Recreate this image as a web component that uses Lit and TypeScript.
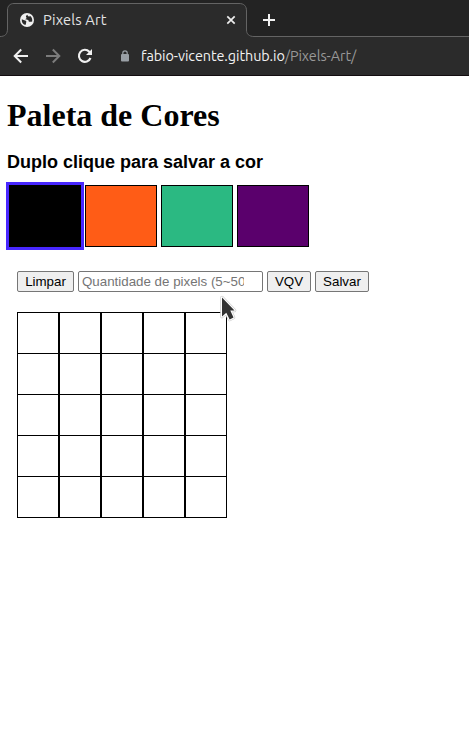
import { LitElement, html, css } from "lit";
import { customElement, state } from "lit/decorators.js";
import { classMap } from "lit/directives/class-map.js";

@customElement("browser-bar")
class BrowserBar extends LitElement {
  static styles = css`
    :host {
      display: block;
      height: 76px;
      box-sizing: border-box;
      background: #2b2b2b;
      border-bottom: 1px solid #130d10;
      font-family: Ubuntu, "Noto Sans", sans-serif;
      color: #e4e4e4;
    }
    svg {
      display: block;
      flex: none;
    }
    .tabs {
      height: 37px;
      display: grid;
      background: #232323;
    }
    .outline,
    .labels {
      grid-area: 1 / 1;
    }
    .labels {
      display: flex;
      align-items: center;
      padding: 3px 0 0 20px;
      height: 34px;
    }
    .title {
      width: 183px;
      padding-left: 9px;
      font-size: 14.667px;
      line-height: 20px;
      letter-spacing: 0.15px;
    }
    .plus {
      margin-left: 27px;
    }
    .toolbar {
      height: 38px;
      display: flex;
      align-items: center;
      padding-left: 13px;
    }
    .forward,
    .reload {
      margin-left: 16px;
    }
    .lock {
      margin-left: 27px;
    }
    .address {
      margin-left: 11px;
      color: #f2f2f2;
      font-size: 14.4px;
      line-height: 20px;
      white-space: nowrap;
      letter-spacing: -0.07px;
    }
    .path {
      color: #989898;
    }
  `;

  render() {
    return html`
      <div class="tabs">
        <svg class="outline" width="469" height="37">
          <path d="M0 36.500C5 36.500 7.500 34 7.500 29V10C7.500 6 10 3.500 14 3.500H239C244 3.500 246.500 6 246.500 11V30C246.500 34 249 36.500 254 36.500H469V38H0Z" fill="#2b2b2b" stroke="#646464" />
        </svg>
        <div class="labels">
          <svg width="14" height="14" viewBox="0 0 14 14">
            <circle cx="7" cy="7" r="7" fill="#f0f0f0" />
            <path d="M7.700 1.700C6.200 2.200 5.500 3.300 6.200 4.200C7 4.800 6.300 5.600 5.400 6C5.500 7.200 7.200 6.600 8.100 7C9 7.500 8.300 8.300 9 8.700C10.200 8.800 11.200 8.800 12.200 8.500C12.600 6 11.600 3.700 9.900 2.700C9.600 4 8.500 3.500 7.700 3Z" fill="#2b2b2b" />
            <path d="M1.800 6.200C3.300 7 5.400 7.100 6.200 8.200C6.800 9 5.700 9.700 5.900 10.300C6.400 10.900 5.500 11.600 5.300 12C2.900 11.300 1.400 9 1.800 6.200Z" fill="#2b2b2b" />
          </svg>
          <span class="title">Pixels Art</span>
          <svg width="10" height="10" viewBox="0 0 10 10">
            <path d="M1.300 1.300L8.700 8.700M8.700 1.300L1.300 8.700" stroke="#ededed" stroke-width="1.700" />
          </svg>
          <svg class="plus" width="12" height="12" viewBox="0 0 12 12">
            <path d="M6 0V12M0 6H12" stroke="#f2f2f2" stroke-width="2" />
          </svg>
        </div>
      </div>
      <div class="toolbar">
        <svg width="16" height="16" viewBox="0 0 16 16">
          <path d="M15 8H2.200M8.200 1.500L1.700 8L8.200 14.500" fill="none" stroke="#f0f0f0" stroke-width="2" />
        </svg>
        <svg class="forward" width="16" height="16" viewBox="0 0 16 16">
          <path d="M1 8H13.800M7.800 1.500L14.300 8L7.800 14.500" fill="none" stroke="#7c7c7c" stroke-width="2" />
        </svg>
        <svg class="reload" width="16" height="16" viewBox="0 0 16 16">
          <path d="M13.500 10A6 6 0 1 1 12.300 3.700L13.500 5" fill="none" stroke="#f0f0f0" stroke-width="2.100" />
          <path d="M15 1V7H9Z" fill="#f0f0f0" />
        </svg>
        <svg class="lock" width="10" height="12" viewBox="0 0 10 12">
          <rect x="1" y="4" width="8" height="7.500" rx="1" fill="#9aa0a6" />
          <path d="M2.800 4.500V3A2.200 2.200 0 0 1 7.200 3V4.500" fill="none" stroke="#9aa0a6" stroke-width="1.200" />
        </svg>
        <span class="address">fabio-vicente.github.io<span class="path">/Pixels-Art/</span></span>
      </div>
    `;
  }
}

@customElement("app-root")
class AppRoot extends LitElement {
  static styles = css`
    :host {
      display: block;
      position: relative;
      width: 469px;
      height: 729px;
      overflow: hidden;
      background: #fff;
      color: #000;
      font-family: "Liberation Sans", Arial, sans-serif;
    }
    h1 {
      margin: 21px 0 0 7px;
      font: bold 32px/37px "Liberation Serif", serif;
    }
    h2 {
      margin: 18px 0 0 7px;
      font-size: 18px;
      line-height: 21px;
    }
    .palette {
      display: flex;
      gap: 4px;
      margin: 12px 0 0 9px;
    }
    .color {
      box-sizing: border-box;
      width: 72px;
      height: 62px;
      border: 1px solid #000;
    }
    .selected {
      outline: 3px solid #4827ff;
    }
    .controls {
      display: flex;
      gap: 4px;
      margin: 24px 0 0 17px;
    }
    button,
    input {
      box-sizing: border-box;
      height: 21px;
      margin: 0;
      border: 1px solid #767676;
      border-radius: 2px;
      font: 13.333px/15px "Liberation Sans", Arial, sans-serif;
      color: #000;
    }
    button {
      padding: 1px 6px;
      background: #efefef;
    }
    .clear {
      width: 57px;
    }
    .apply {
      width: 44px;
    }
    .save {
      width: 54px;
    }
    input {
      width: 185px;
      padding: 1px 18px 1px 3px;
      background: #fff;
    }
    input::placeholder {
      color: #757575;
    }
    .board {
      display: grid;
      grid-template-columns: repeat(5, 42px);
      grid-auto-rows: 41px;
      width: 210px;
      margin: 20px 0 0 17px;
      border-top: 1px solid #000;
    }
    .pixel {
      border: solid #000;
      border-width: 0 1px 1px;
    }
    .cursor {
      position: absolute;
      left: 217px;
      top: 293px;
    }
  `;

  @state() selected = 0;

  colors = ["#000000", "#ff5c16", "#2bb982", "#5a006c"];

  render() {
    return html`
      <browser-bar></browser-bar>
      <h1>Paleta de Cores</h1>
      <h2>Duplo clique para salvar a cor</h2>
      <div class="palette">
        ${this.colors.map(
          (c, i) => html`<div
            class=${classMap({ color: true, selected: i === this.selected })}
            style="background:${c}"
            @click=${() => (this.selected = i)}
          ></div>`
        )}
      </div>
      <div class="controls">
        <button class="clear">Limpar</button>
        <input placeholder="Quantidade de pixels (5~50)" />
        <button class="apply">VQV</button>
        <button class="save">Salvar</button>
      </div>
      <div class="board">
        ${Array.from({ length: 25 }, () => html`<div class="pixel"></div>`)}
      </div>
      <svg class="cursor" width="24" height="32" viewBox="0 0 24 32">
        <path d="M5 4.500L17.500 17.500H13.300L16.500 24.500L12.700 26.500L9.300 19.800L5 23.500Z" fill="#333" stroke="#d0d0d0" stroke-width="3.600" stroke-linejoin="round" />
        <path d="M5 4.500L17.500 17.500H13.300L16.500 24.500L12.700 26.500L9.300 19.800L5 23.500Z" fill="#333" stroke="#fff" stroke-width="2.200" stroke-linejoin="round" />
        <path d="M5 4.500L17.500 17.500H13.300L16.500 24.500L12.700 26.500L9.300 19.800L5 23.500Z" fill="#333" />
      </svg>
    `;
  }
}
